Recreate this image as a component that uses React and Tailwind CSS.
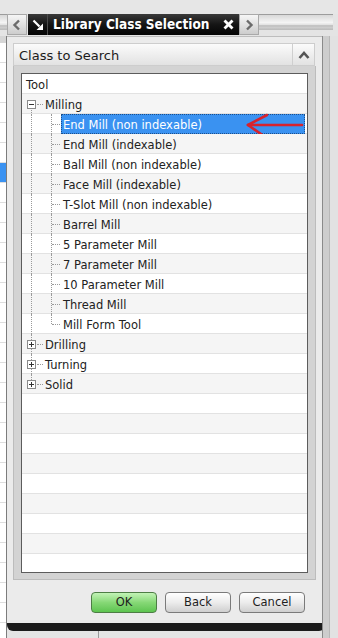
import React from 'react';

const FONT = "font-['DejaVu_Sans',sans-serif]";

const rows = [
  { label: 'Tool', kind: 'top' },
  { label: 'Milling', kind: 'open' },
  { label: 'End Mill (non indexable)', kind: 'child', selected: true },
  { label: 'End Mill (indexable)', kind: 'child' },
  { label: 'Ball Mill (non indexable)', kind: 'child' },
  { label: 'Face Mill (indexable)', kind: 'child' },
  { label: 'T-Slot Mill (non indexable)', kind: 'child' },
  { label: 'Barrel Mill', kind: 'child' },
  { label: '5 Parameter Mill', kind: 'child' },
  { label: '7 Parameter Mill', kind: 'child' },
  { label: '10 Parameter Mill', kind: 'child' },
  { label: 'Thread Mill', kind: 'child' },
  { label: 'Mill Form Tool', kind: 'child', last: true },
  { label: 'Drilling', kind: 'closed' },
  { label: 'Turning', kind: 'closed' },
  { label: 'Solid', kind: 'closed', last: true },
  ...Array.from({ length: 9 }, () => ({ label: '', kind: 'empty' })),
];

function Expander({ open }) {
  return (
    <div className="absolute left-[5px] top-[6px] w-[9px] h-[9px] border border-[#8a8a8a] bg-white flex items-center justify-center">
      <div className="relative w-[5px] h-[5px]">
        <div className="absolute left-0 top-[2px] w-[5px] h-px bg-[#333]" />
        {!open && <div className="absolute left-[2px] top-0 w-px h-[5px] bg-[#333]" />}
      </div>
    </div>
  );
}

function TreeRow({ row, index }) {
  const odd = index % 2 === 1;
  const { kind } = row;
  return (
    <div
      className={`relative h-[20px] flex items-center border-b border-[#e2e2e2] ${odd ? 'bg-[#f5f5f5]' : 'bg-white'}`}
    >
      {/* root-level connector */}
      {kind === 'open' && (
        <div className="absolute left-[9px] top-[10px] bottom-0 border-l border-dotted border-[#9a9a9a]" />
      )}
      {(kind === 'child' || (kind === 'closed' && !row.last)) && (
        <div className="absolute left-[9px] top-0 bottom-[-1px] border-l border-dotted border-[#9a9a9a]" />
      )}
      {kind === 'closed' && row.last && (
        <div className="absolute left-[9px] top-0 h-[10px] border-l border-dotted border-[#9a9a9a]" />
      )}
      {/* child connector */}
      {kind === 'child' && (
        <div
          className={`absolute left-[29px] top-0 border-l border-dotted border-[#9a9a9a] ${row.last ? 'h-[10px]' : 'bottom-[-1px]'}`}
        />
      )}
      {kind === 'child' && (
        <div className="absolute left-[30px] top-[10px] w-[8px] border-t border-dotted border-[#9a9a9a]" />
      )}
      {(kind === 'open' || kind === 'closed') && (
        <>
          <div className="absolute left-[15px] top-[10px] w-[6px] border-t border-dotted border-[#9a9a9a]" />
          <Expander open={kind === 'open'} />
        </>
      )}

      {kind === 'top' && <span className="pl-[4px] text-[#222] translate-y-[1.5px]">{row.label}</span>}
      {(kind === 'open' || kind === 'closed') && (
        <span className="pl-[23px] text-[#222] translate-y-[1.5px]">{row.label}</span>
      )}
      {kind === 'child' && (
        <span
          className={`ml-[39px] mr-[2px] flex-1 h-[20px] flex items-center pl-[2px] ${
            row.selected
              ? 'bg-[#3a92f1] text-white outline outline-1 outline-dotted outline-[#1d4f8a] -outline-offset-1'
              : 'text-[#222]'
          }`}
        >
          <span className="translate-y-[1.5px]">{row.label}</span>
        </span>
      )}

      {row.selected && (
        <svg className="absolute left-[224px] top-[-1px]" width="58" height="28" viewBox="0 0 58 28">
          <g stroke="#d7232e" strokeWidth="2.6" strokeLinecap="round" fill="none">
            <line x1="2" y1="12" x2="56" y2="12" />
            <line x1="2" y1="12" x2="21" y2="2" />
            <line x1="2" y1="12" x2="22" y2="26" />
          </g>
        </svg>
      )}
    </div>
  );
}

function Rail() {
  return (
    <div className="h-[16px] border-t border-[#9c9c9c] bg-gradient-to-b from-[#d8d8d8] via-[#f4f4f4] to-[#b9b9b9]">
      <div className="mt-[10px] h-[2px] bg-[#c4c4c4]" />
    </div>
  );
}

function GrayButton({ children }) {
  return (
    <div className="w-[20px] h-[21px] border border-[#a9a9a9] bg-gradient-to-b from-[#f6f6f6] to-[#cdcdcd] flex items-center justify-center">
      {children}
    </div>
  );
}

function DialogButton({ label, primary }) {
  return (
    <button
      className={`w-[66px] h-[21px] rounded-[4px] border text-[11.5px] text-[#1e1e1e] ${
        primary
          ? 'border-[#4d7d45] bg-gradient-to-b from-[#c2f3b6] via-[#86d876] to-[#5dc450]'
          : 'border-[#7a7a7a] bg-gradient-to-b from-[#ffffff] via-[#ececec] to-[#cfcfcf]'
      }`}
    >
      {label}
    </button>
  );
}

export default function App() {
  return (
    <div className={`w-[338px] h-[638px] overflow-hidden bg-[#e4e4e4] flex flex-col ${FONT}`}>
      <div className="h-[14px] shrink-0 bg-[#e6e6e6]" />

      {/* title tab row */}
      <div className="h-[22px] shrink-0 flex">
        <div className="w-[7px]">
          <Rail />
        </div>
        <GrayButton>
          <svg width="10" height="12" viewBox="0 0 10 12">
            <polyline points="7,1.5 2.5,6 7,10.5" fill="none" stroke="#6b6b6b" strokeWidth="2.4" />
          </svg>
        </GrayButton>
        <div className="ml-px flex h-[21px] bg-gradient-to-b from-[#3a3a3a] via-[#151515] to-[#050505]">
          <div className="w-[20px] flex items-center justify-center border-r border-[#4c4c4c]">
            <svg width="12" height="12" viewBox="0 0 12 12">
              <line x1="1.5" y1="1.5" x2="7.5" y2="7.5" stroke="white" strokeWidth="2.2" />
              <polygon points="11,11 11,4.5 4.5,11" fill="white" />
            </svg>
          </div>
          <div className="w-[170px] flex items-center pl-[5px] text-white font-bold text-[13.5px] font-['DejaVu_Sans_Condensed','DejaVu_Sans',sans-serif] [font-stretch:condensed] whitespace-nowrap overflow-hidden">
            Library Class Selection
          </div>
          <div className="w-[21px] flex items-center justify-center">
            <svg width="11" height="11" viewBox="0 0 11 11">
              <g stroke="white" strokeWidth="2.8">
                <line x1="1.5" y1="1.5" x2="9.5" y2="9.5" />
                <line x1="9.5" y1="1.5" x2="1.5" y2="9.5" />
              </g>
            </svg>
          </div>
        </div>
        <GrayButton>
          <svg width="10" height="12" viewBox="0 0 10 12">
            <polyline points="3,1.5 7.5,6 3,10.5" fill="none" stroke="#6b6b6b" strokeWidth="2.4" />
          </svg>
        </GrayButton>
        <div className="flex-1 pr-[5px]">
          <Rail />
        </div>
      </div>

      {/* main row */}
      <div className="flex-1 min-h-0 flex">
        {/* list behind, left */}
        <div className="w-[7px] overflow-hidden flex flex-col border-r border-[#7c7c7c]">
          <div className="h-[7px] shrink-0 bg-[#d6d6d6]" />
          {Array.from({ length: 30 }, (_, i) => (
            <div
              key={i}
              className={`h-[20px] shrink-0 border-b border-[#dedede] ${i === 6 ? 'bg-[#3a92f1]' : 'bg-white'}`}
            />
          ))}
        </div>

        {/* dialog */}
        <div className="w-[315px] flex flex-col">
          <div className="h-[587px] shrink-0 bg-[#ebebeb] border-t border-[#bdbdbd] pt-[6px] pl-[6px] pr-[7px] flex flex-col">
            {/* group header */}
            <div className="h-[23px] shrink-0 flex border border-[#cdcdcd] bg-gradient-to-b from-[#fbfbfb] to-[#e2e2e2]">
              <div className="flex-1 flex items-center pl-[5px] text-[13px] text-[#1b1b1b]">
                <span className="translate-y-px">Class to Search</span>
              </div>
              <div className="w-[22px] flex items-center justify-center border-l border-[#cfcfcf]">
                <svg width="12" height="10" viewBox="0 0 12 10">
                  <polyline points="1.5,8 6,3 10.5,8" fill="none" stroke="#555" strokeWidth="2.6" />
                </svg>
              </div>
            </div>
            {/* group frame with tree */}
            <div className="w-[303px] shrink-0 bg-[#d3d3d3] border-x border-b border-[#bcbcbc] pt-[7px] pb-[6px] pl-[7px] pr-[7px]">
              <div className="h-[500px] border border-[#5c5c5c] bg-white overflow-hidden text-[11.5px]">
                {rows.map((row, i) => (
                  <TreeRow key={i} row={row} index={i} />
                ))}
              </div>
            </div>
            {/* buttons */}
            <div className="mt-[12px] flex justify-end gap-[8px] pr-[10px]">
              <DialogButton label="OK" primary />
              <DialogButton label="Back" />
              <DialogButton label="Cancel" />
            </div>
          </div>
          <div className="h-[8px] shrink-0 w-[318px] bg-[#1b1b1b] rounded-b-[6px]" />
          <div className="flex-1 flex">
            <div className="w-[92px] border-r border-[#9a9a9a]" />
          </div>
        </div>

        {/* right strip */}
        <div className="flex-1 flex border-l border-[#8a8a8a]">
          <div className="w-[7px] bg-[#cdcdcd] border-r border-[#b8b8b8]" />
          <div className="flex-1 bg-[#e2e2e2]" />
        </div>
      </div>
    </div>
  );
}
